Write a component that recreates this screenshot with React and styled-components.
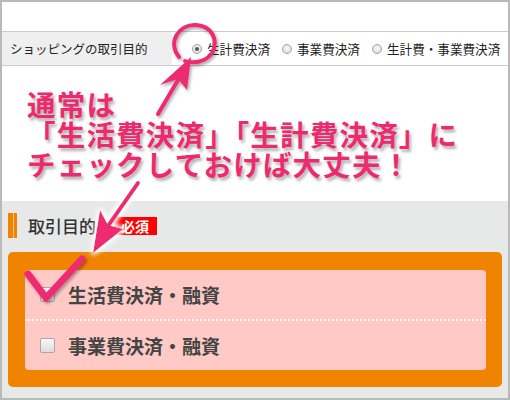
import React from "react";
import styled, { createGlobalStyle } from "styled-components";

const GlobalStyle = createGlobalStyle`
  html, body { margin: 0; padding: 0; background: #fff; }
  body { font-family: "Noto Sans CJK JP", "Noto Sans", sans-serif; }
`;

const PINK = "#ee2a6f";
const ORANGE = "#f08300";

const Frame = styled.div`
  position: relative;
  width: 510px;
  height: 400px;
  box-sizing: border-box;
  border: 2px solid #b9b9b9;
  background: #fff;
  display: flex;
  flex-direction: column;
  overflow: hidden;
`;

const TopSpace = styled.div`
  height: 29px;
  flex: none;
`;

const PurposeBar = styled.div`
  display: flex;
  height: 33px;
  flex: none;
  border-top: 1px solid #cdcdcd;
  border-bottom: 1px solid #cdcdcd;
`;

const BarLabel = styled.div`
  width: 162px;
  padding-left: 8px;
  background: #efefef;
  display: flex;
  align-items: center;
  font-size: 12.5px;
  color: #222;
  white-space: nowrap;
`;

const RadioGroup = styled.div`
  display: flex;
  align-items: center;
  gap: 12px;
  padding-left: 20px;
`;

const RadioOption = styled.label`
  display: flex;
  align-items: center;
  gap: 5px;
  font-size: 12.6px;
  color: #222;
  white-space: nowrap;
`;

const RadioDot = styled.span`
  width: 10px;
  height: 10px;
  box-sizing: border-box;
  border-radius: 50%;
  border: 1px solid #a3a3a3;
  background: radial-gradient(circle at 50% 40%, #fafafa, #d6d6d6);
  display: flex;
  align-items: center;
  justify-content: center;
  &::after {
    content: "";
    width: 4px;
    height: 4px;
    border-radius: 50%;
    background: ${(p) => (p.$checked ? "#555" : "transparent")};
  }
`;

const CalloutArea = styled.div`
  height: 135px;
  flex: none;
  box-sizing: border-box;
  padding: 23px 0 0 25px;
`;

const CalloutText = styled.p`
  margin: 0;
  font-size: 28.5px;
  line-height: 30px;
  font-weight: 700;
  color: ${PINK};
  letter-spacing: 1.2px;
  text-shadow: 2px 3px 3px rgba(0, 0, 0, 0.3);
  white-space: nowrap;
`;

const Section = styled.div`
  flex: 1;
  background: #e7e8e8;
  padding: 12px 6px 12px 6px;
  display: flex;
  flex-direction: column;
`;

const Heading = styled.div`
  display: flex;
  align-items: center;
  height: 25px;
`;

const HeadingBar = styled.span`
  width: 1px;
  height: 25px;
  border-left: 5px solid ${ORANGE};
  border-right: 3px solid ${ORANGE};
  background: #f6c48c;
`;

const HeadingTitle = styled.span`
  margin-left: 11px;
  font-size: 17px;
  color: #333;
  font-weight: 500;
`;

const RequiredBadge = styled.span`
  margin-left: 17px;
  height: 18px;
  padding: 0 8px;
  background: #ff0000;
  color: #fff;
  font-size: 14px;
  font-weight: 700;
  display: flex;
  align-items: center;
`;

const OrangeBox = styled.div`
  margin-top: 14px;
  background: ${ORANGE};
  border-radius: 5px;
  padding: 18px 16px 17px 17px;
`;

const OptionList = styled.div`
  background: #ffc9c6;
  border-radius: 4px;
  display: flex;
  flex-direction: column;
`;

const OptionRow = styled.label`
  height: 49px;
  display: flex;
  align-items: center;
  gap: 13px;
  padding-left: 15px;
  border-top: ${(p) => (p.$first ? "none" : "2px dotted #fff4f4")};
  font-size: 19px;
  font-weight: 700;
  color: #444;
`;

const CheckBox = styled.span`
  width: 15px;
  height: 15px;
  box-sizing: border-box;
  border: 1px solid #a9a9a9;
  border-radius: 2px;
  background: linear-gradient(#f7f7f7, #dcdcdc);
`;

const Overlay = styled.svg`
  position: absolute;
  top: -2px;
  left: -2px;
  width: 510px;
  height: 400px;
  pointer-events: none;
`;

function Annotations() {
  return (
    <Overlay viewBox="0 0 510 400">
      <defs>
        <filter id="sh" x="-20%" y="-20%" width="140%" height="140%">
          <feDropShadow dx="1.5" dy="2" stdDeviation="1.5" floodColor="#000" floodOpacity="0.35" />
        </filter>
        <filter id="glow" x="-30%" y="-30%" width="160%" height="160%">
          <feMorphology in="SourceAlpha" operator="dilate" radius="2" result="d" />
          <feGaussianBlur in="d" stdDeviation="2" result="b" />
          <feFlood floodColor="#fff" result="w" />
          <feComposite in="w" in2="b" operator="in" result="halo" />
          <feMerge>
            <feMergeNode in="halo" />
            <feMergeNode in="SourceGraphic" />
          </feMerge>
        </filter>
      </defs>
      <g filter="url(#sh)">
        <path
          d="M179 57 C167 42 179 24 196 25 C212 26 219 40 212 53 C206 62 193 64 185 61"
          fill="none"
          stroke={PINK}
          strokeWidth="4"
          strokeLinecap="round"
        />
        <line x1="158" y1="114" x2="178" y2="80" stroke={PINK} strokeWidth="4" strokeLinecap="round" />
        <polygon points="191,57 187,90 178,79 160,85" fill={PINK} />
      </g>
      <g filter="url(#glow)">
        <line x1="138" y1="183" x2="108" y2="226" stroke={PINK} strokeWidth="4" strokeLinecap="round" />
        <polygon points="93,253 100,210 108,225 123,229" fill={PINK} />
      </g>
      <g filter="url(#sh)">
        <path
          d="M28 274 L46 298 L82 259"
          fill="none"
          stroke={PINK}
          strokeWidth="7"
          strokeLinecap="round"
          strokeLinejoin="round"
        />
      </g>
    </Overlay>
  );
}

const radios = [
  { label: "生計費決済", checked: true },
  { label: "事業費決済", checked: false },
  { label: "生計費・事業費決済", checked: false },
];

const options = ["生活費決済・融資", "事業費決済・融資"];

export default function App() {
  return (
    <>
      <GlobalStyle />
      <Frame>
        <TopSpace />
        <PurposeBar>
          <BarLabel>ショッピングの取引目的</BarLabel>
          <RadioGroup>
            {radios.map((r) => (
              <RadioOption key={r.label}>
                <RadioDot $checked={r.checked} />
                {r.label}
              </RadioOption>
            ))}
          </RadioGroup>
        </PurposeBar>
        <CalloutArea>
          <CalloutText>
            通常は
            <br />
            「生活費決済」「生計費決済」に
            <br />
            チェックしておけば大丈夫！
          </CalloutText>
        </CalloutArea>
        <Section>
          <Heading>
            <HeadingBar />
            <HeadingTitle>取引目的</HeadingTitle>
            <RequiredBadge>必須</RequiredBadge>
          </Heading>
          <OrangeBox>
            <OptionList>
              {options.map((o, i) => (
                <OptionRow key={o} $first={i === 0}>
                  <CheckBox />
                  {o}
                </OptionRow>
              ))}
            </OptionList>
          </OrangeBox>
        </Section>
        <Annotations />
      </Frame>
    </>
  );
}
